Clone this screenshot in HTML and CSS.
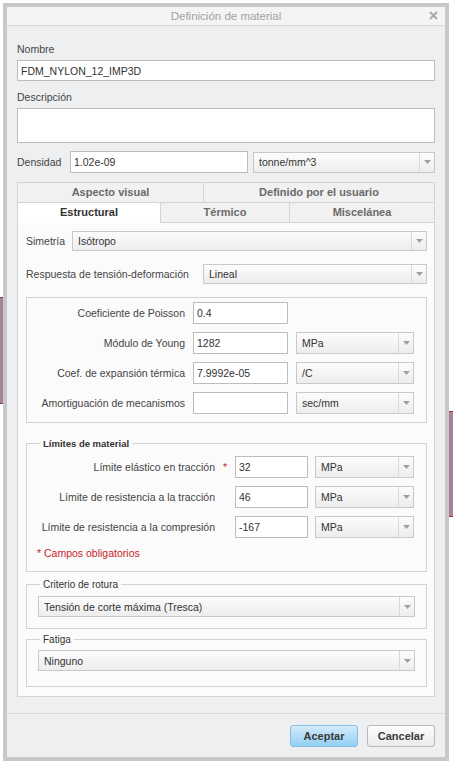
FILE: index.html
```html
<!DOCTYPE html>
<html lang="es">
<head>
    <meta charset="UTF-8">
    <meta name="viewport" content="width=device-width, initial-scale=1.0">
    <title>Definición de material</title>
    <link rel="stylesheet" href="styles.css">
</head>
<body>
    <!-- Trozos de la ventana de fondo -->
    <div class="backdrop backdrop-left"></div>
    <div class="backdrop backdrop-right"></div>

    <div class="dialog">
        <div class="dialog-title">
            Definición de material
            <span class="close-btn">
                <svg width="9" height="9" viewBox="0 0 9 9"><path d="M1 1L8 8M8 1L1 8" stroke="#a9a9a9" stroke-width="2"/></svg>
            </span>
        </div>

        <div class="dialog-body">
            <label class="field-label" for="mat-name">Nombre</label>
            <input class="text-field" id="mat-name" value="FDM_NYLON_12_IMP3D">

            <label class="field-label label-desc" for="mat-desc">Descripción</label>
            <textarea class="text-area" id="mat-desc"></textarea>

            <div class="density-row">
                <label class="density-label" for="mat-density">Densidad</label>
                <input class="text-field density-input" id="mat-density" value="1.02e-09">
                <div class="select density-unit">
                    <span class="select-value">tonne/mm^3</span>
                    <span class="select-arrow"><svg width="7" height="4" viewBox="0 0 7 4"><path d="M0 0H7L3.5 4Z" fill="#a0a0a0"/></svg></span>
                </div>
            </div>

            <!-- Pestañas -->
            <div class="tabs">
                <div class="tab-row">
                    <div class="tab tab-visual">Aspecto visual</div>
                    <div class="tab tab-user">Definido por el usuario</div>
                </div>
                <div class="tab-row">
                    <div class="tab tab-struct active">Estructural</div>
                    <div class="tab tab-thermal">Térmico</div>
                    <div class="tab tab-misc">Miscelánea</div>
                </div>
            </div>

            <div class="tab-panel">
                <div class="form-row">
                    <span class="row-label sym-label">Simetría</span>
                    <div class="select grow">
                        <span class="select-value">Isótropo</span>
                        <span class="select-arrow"><svg width="7" height="4" viewBox="0 0 7 4"><path d="M0 0H7L3.5 4Z" fill="#a0a0a0"/></svg></span>
                    </div>
                </div>
                <div class="form-row row-response">
                    <span class="row-label resp-label">Respuesta de tensión-deformación</span>
                    <div class="select grow">
                        <span class="select-value">Lineal</span>
                        <span class="select-arrow"><svg width="7" height="4" viewBox="0 0 7 4"><path d="M0 0H7L3.5 4Z" fill="#a0a0a0"/></svg></span>
                    </div>
                </div>

                <!-- Propiedades elásticas -->
                <fieldset class="group group-props">
                    <div class="prop-row">
                        <span class="prop-label">Coeficiente de Poisson</span>
                        <input class="text-field prop-input" value="0.4">
                    </div>
                    <div class="prop-row">
                        <span class="prop-label">Módulo de Young</span>
                        <input class="text-field prop-input" value="1282">
                        <div class="select prop-unit">
                            <span class="select-value">MPa</span>
                            <span class="select-arrow"><svg width="7" height="4" viewBox="0 0 7 4"><path d="M0 0H7L3.5 4Z" fill="#a0a0a0"/></svg></span>
                        </div>
                    </div>
                    <div class="prop-row">
                        <span class="prop-label">Coef. de expansión térmica</span>
                        <input class="text-field prop-input" value="7.9992e-05">
                        <div class="select prop-unit">
                            <span class="select-value">/C</span>
                            <span class="select-arrow"><svg width="7" height="4" viewBox="0 0 7 4"><path d="M0 0H7L3.5 4Z" fill="#a0a0a0"/></svg></span>
                        </div>
                    </div>
                    <div class="prop-row">
                        <span class="prop-label">Amortiguación de mecanismos</span>
                        <input class="text-field prop-input" value="">
                        <div class="select prop-unit">
                            <span class="select-value">sec/mm</span>
                            <span class="select-arrow"><svg width="7" height="4" viewBox="0 0 7 4"><path d="M0 0H7L3.5 4Z" fill="#a0a0a0"/></svg></span>
                        </div>
                    </div>
                </fieldset>

                <fieldset class="group group-limits">
                    <legend class="legend legend-bold">Límites de material</legend>
                    <div class="limit-row">
                        <span class="limit-label">Límite elástico en tracción</span>
                        <span class="required">*</span>
                        <input class="text-field limit-input" value="32">
                        <div class="select limit-unit">
                            <span class="select-value">MPa</span>
                            <span class="select-arrow"><svg width="7" height="4" viewBox="0 0 7 4"><path d="M0 0H7L3.5 4Z" fill="#a0a0a0"/></svg></span>
                        </div>
                    </div>
                    <div class="limit-row">
                        <span class="limit-label">Límite de resistencia a la tracción</span>
                        <span class="required"></span>
                        <input class="text-field limit-input" value="46">
                        <div class="select limit-unit">
                            <span class="select-value">MPa</span>
                            <span class="select-arrow"><svg width="7" height="4" viewBox="0 0 7 4"><path d="M0 0H7L3.5 4Z" fill="#a0a0a0"/></svg></span>
                        </div>
                    </div>
                    <div class="limit-row">
                        <span class="limit-label">Límite de resistencia a la compresión</span>
                        <span class="required"></span>
                        <input class="text-field limit-input" value="-167">
                        <div class="select limit-unit">
                            <span class="select-value">MPa</span>
                            <span class="select-arrow"><svg width="7" height="4" viewBox="0 0 7 4"><path d="M0 0H7L3.5 4Z" fill="#a0a0a0"/></svg></span>
                        </div>
                    </div>
                    <div class="required-note">* Campos obligatorios</div>
                </fieldset>

                <fieldset class="group group-criteria">
                    <legend class="legend legend-inset">Criterio de rotura</legend>
                    <div class="select wide-select">
                        <span class="select-value">Tensión de corte máxima (Tresca)</span>
                        <span class="select-arrow"><svg width="7" height="4" viewBox="0 0 7 4"><path d="M0 0H7L3.5 4Z" fill="#a0a0a0"/></svg></span>
                    </div>
                </fieldset>

                <fieldset class="group group-fatigue">
                    <legend class="legend legend-inset">Fatiga</legend>
                    <div class="select wide-select">
                        <span class="select-value">Ninguno</span>
                        <span class="select-arrow"><svg width="7" height="4" viewBox="0 0 7 4"><path d="M0 0H7L3.5 4Z" fill="#a0a0a0"/></svg></span>
                    </div>
                </fieldset>
            </div>
        </div>

        <div class="dialog-footer">
            <button class="btn btn-primary">Aceptar</button>
            <button class="btn">Cancelar</button>
        </div>
    </div>
</body>
</html>
```

FILE: styles.css
```css
* {
    box-sizing: border-box;
    margin: 0;
    padding: 0;
}

body {
    font-family: "Liberation Sans", Arial, sans-serif;
    font-size: 10.5px;
    color: #444;
    background: #fff;
    position: relative;
    width: 453px;
    height: 764px;
    overflow: hidden;
}

/* ventana de fondo que asoma por los lados */
.backdrop {
    position: absolute;
    background: #a7829b;
    border-top: 1px solid #8c3a5a;
    border-bottom: 1px solid #8c3a5a;
}

.backdrop-left {
    left: 0;
    top: 297px;
    width: 4px;
    height: 107px;
}

.backdrop-right {
    left: 448px;
    top: 411px;
    width: 5px;
    height: 106px;
}

.dialog {
    position: relative;
    margin: 3px 0 0 3px;
    width: 446px;
    border: 4px solid #c8c8c8;
    background: #eeeff1;
    display: flex;
    flex-direction: column;
}

.dialog-title {
    position: relative;
    height: 19px;
    line-height: 18px;
    border-bottom: 1px solid #d9d9d9;
    background: #f4f4f5;
    text-align: center;
    font-size: 11.5px;
    color: #a2a2a2;
}

.close-btn {
    position: absolute;
    right: 7px;
    top: 4px;
    width: 9px;
    height: 9px;
    line-height: 0;
}

.dialog-body {
    padding: 0 10px;
    display: flex;
    flex-direction: column;
}

.field-label {
    display: block;
    line-height: 14px;
    margin-top: 16px;
    color: #444;
}

.label-desc {
    margin-top: 9px;
}

.text-field {
    display: block;
    height: 21px;
    margin-top: 4px;
    padding: 0 3px;
    border: 1px solid #bdbdbd;
    background: #fff;
    font-family: inherit;
    font-size: 10.5px;
    color: #333;
    outline: none;
}

.text-area {
    display: block;
    height: 35px;
    margin-top: 4px;
    border: 1px solid #bdbdbd;
    background: #fff;
    resize: none;
    outline: none;
}

.density-row {
    display: flex;
    align-items: center;
    margin-top: 8px;
    height: 22px;
}

.density-label {
    width: 53px;
}

.density-input {
    width: 178px;
    height: 22px;
    margin-top: 0;
}

.density-unit {
    flex: 1;
    height: 22px;
    margin-left: 5px;
}

/* desplegables */
.select {
    display: flex;
    align-items: stretch;
    height: 21px;
    border: 1px solid #c9c9c9;
    background: linear-gradient(#fcfcfc, #ededed);
    color: #333;
}

.select-value {
    flex: 1;
    display: flex;
    align-items: center;
    padding-left: 5px;
    white-space: nowrap;
    overflow: hidden;
}

.select-arrow {
    width: 15px;
    border-left: 1px solid #d9d9d9;
    display: flex;
    align-items: center;
    justify-content: center;
}

.grow {
    flex: 1;
}

/* pestañas */
.tabs {
    margin-top: 9px;
}

.tab-row {
    display: flex;
}

.tab {
    height: 20px;
    border-top: 1px solid #d3d3d3;
    border-left: 1px solid #d3d3d3;
    background: #f1f1f1;
    font-size: 11px;
    font-weight: bold;
    color: #6a6a6a;
    text-align: center;
    line-height: 19px;
}

.tab-row .tab:last-child {
    border-right: 1px solid #d3d3d3;
}

.tab-visual { width: 186px; }
.tab-user { flex: 1; }

.tab-struct,
.tab-thermal,
.tab-misc {
    height: 21px;
    border-bottom: 1px solid #d3d3d3;
}

.tab-struct { width: 143px; }
.tab-thermal { width: 129px; }
.tab-misc { flex: 1; }

.tab.active {
    background: #fff;
    color: #333;
    border-bottom: none;
    border-top-right-radius: 3px;
}

.tab-panel {
    border: 1px solid #d3d3d3;
    border-top: none;
    background: #fbfbfb;
    padding: 8px 7px 9px 8px;
}

.form-row {
    display: flex;
    align-items: center;
    height: 20px;
}

.form-row .select {
    height: 20px;
}

.row-response {
    margin-top: 13px;
}

.sym-label {
    width: 46px;
}

.resp-label {
    width: 177px;
}

/* grupos */
.group {
    border: 1px solid #d3d3d3;
    min-width: 0;
    padding: 0;
}

.legend {
    margin-left: 13px;
    padding: 0 3px;
    line-height: 13px;
    font-size: 10px;
    color: #333;
}

.legend-bold {
    font-weight: bold;
    font-size: 9.5px;
}

/* el grupo ya tiene 11px de relleno a la izquierda */
.legend-inset {
    margin-left: 2px;
}

.group-props {
    margin-top: 13px;
    padding: 4px 0 8px 0;
}

.prop-row,
.limit-row {
    display: flex;
    align-items: center;
    height: 22px;
}

.prop-row + .prop-row,
.limit-row + .limit-row {
    margin-top: 8px;
}

.prop-label {
    width: 158px;
    text-align: right;
    margin-right: 8px;
}

.prop-input {
    width: 95px;
    height: 22px;
    margin-top: 0;
}

.prop-unit {
    width: 118px;
    height: 22px;
    margin-left: 8px;
}

.group-limits {
    margin-top: 14px;
    padding: 6px 0 11px 0;
}

.limit-label {
    width: 188px;
    text-align: right;
}

.required {
    width: 20px;
    text-align: center;
    color: #d0262b;
}

.limit-input {
    width: 73px;
    height: 22px;
    margin-top: 0;
}

.limit-unit {
    width: 99px;
    height: 22px;
    margin-left: 7px;
}

.required-note {
    margin: 8px 0 0 10px;
    line-height: 14px;
    color: #c8232b;
}

.group-criteria {
    margin-top: 6px;
    padding: 5px 11px 11px 11px;
}

.group-fatigue {
    margin-top: 4px;
    padding: 4px 11px 15px 11px;
}

.wide-select {
    height: 21px;
}

/* botones */
.dialog-footer {
    margin-top: 16px;
    border-top: 1px solid #d8d8d8;
    padding: 11px 10px 10px;
    display: flex;
    justify-content: flex-end;
    gap: 9px;
}

.btn {
    width: 68px;
    height: 22px;
    border: 1px solid #b9b9b9;
    border-radius: 3px;
    background: linear-gradient(#fdfdfd, #ebebeb);
    font-family: inherit;
    font-size: 11px;
    font-weight: bold;
    color: #3a3a3a;
}

.btn-primary {
    border-color: #86bde2;
    background: linear-gradient(#d3ebfb, #92cff3);
}
```
